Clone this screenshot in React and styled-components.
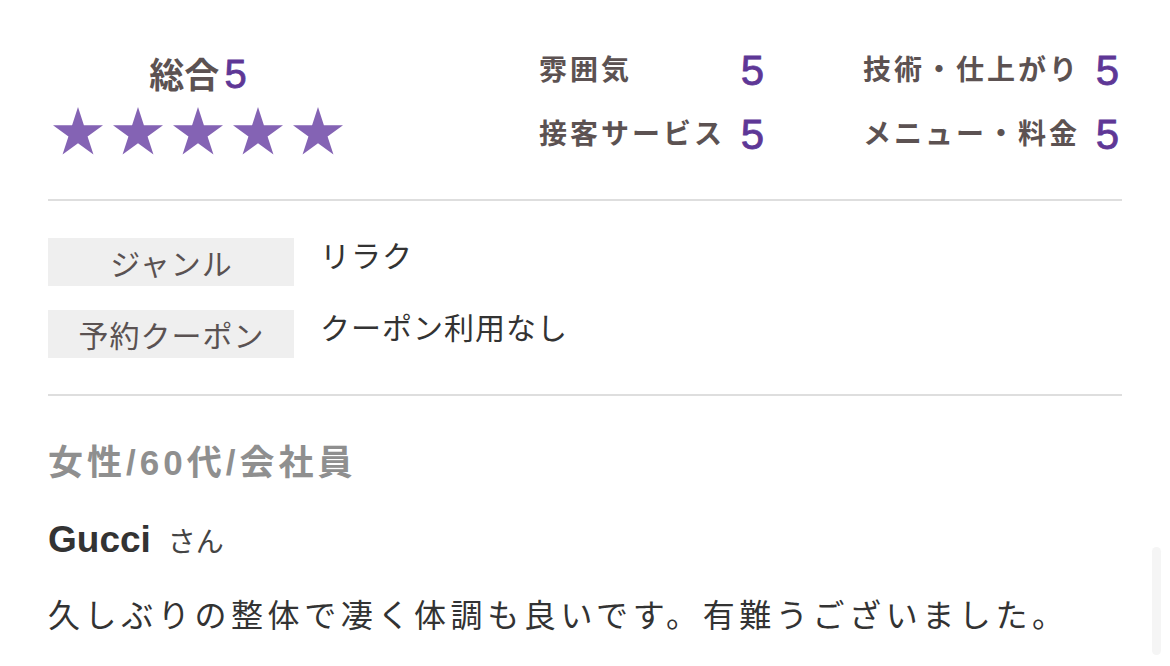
import styled, { createGlobalStyle } from "styled-components";

const GlobalStyle = createGlobalStyle`
    html, body {
        margin: 0;
        padding: 0;
        background: #ffffff;
    }
    body {
        font-family: "Liberation Sans", "Noto Sans CJK JP", sans-serif;
        color: #333333;
    }
`;

const Page = styled.div`
    position: relative;
    width: 1170px;
    height: 666px;
    overflow: hidden;
    box-sizing: border-box;
    padding: 0 48px;
`;

const Top = styled.section`
    display: flex;
    justify-content: space-between;
    align-items: flex-start;
    padding: 39px 3px 32px 5px;
`;

const Overall = styled.div`
    display: flex;
    flex-direction: column;
    align-items: center;
    width: 290px;
    margin-top: 15px;
`;

const OverallTitle = styled.div`
    font-size: 35px;
    font-weight: 700;
    line-height: 40px;
    color: #5c5252;
    display: flex;
    align-items: baseline;
    gap: 5px;
`;

const Score = styled.span`
    font-family: "Liberation Sans", sans-serif;
    font-size: ${props => props.$size || "42px"};
    font-weight: 400;
    -webkit-text-stroke: 0.8px #5e3796;
    color: #5e3796;
    line-height: 1;
`;

const Stars = styled.div`
    display: flex;
    gap: 10px;
    margin-top: 11px;
`;

const StarIcon = styled.svg`
    width: 50px;
    height: 48px;
    fill: #8463b4;
    display: block;
`;

const Ratings = styled.div`
    display: grid;
    grid-template-columns: 225px 256px;
    grid-auto-rows: 64px;
    column-gap: 99px;
    align-items: center;
`;

const RatingCell = styled.div`
    display: flex;
    justify-content: space-between;
    align-items: center;
`;

const RatingLabel = styled.span`
    font-size: 28px;
    font-weight: 700;
    letter-spacing: 3px;
    color: #5c5252;
    line-height: 1;
`;

const Divider = styled.hr`
    margin: 0;
    border: none;
    height: 2px;
    background: #dedede;
`;

const InfoTable = styled.div`
    display: flex;
    flex-direction: column;
    gap: 24px;
    padding: 37px 0 36px;
`;

const InfoRow = styled.div`
    display: flex;
    align-items: flex-start;
    gap: 26px;
`;

const InfoLabel = styled.div`
    width: 246px;
    height: 48px;
    display: flex;
    align-items: center;
    justify-content: center;
    background: #efefef;
    font-size: 30px;
    letter-spacing: 1px;
    padding-left: 1px;
    box-sizing: border-box;
    color: #5a5252;
`;

const InfoValue = styled.div`
    font-size: 30px;
    letter-spacing: 1px;
    line-height: 38px;
    color: #333333;
`;

const Review = styled.section`
    padding-top: 47px;
`;

const Demographic = styled.div`
    font-size: 35px;
    font-weight: 700;
    line-height: 40px;
    letter-spacing: 4px;
    color: #8f8f8f;
`;

const Reviewer = styled.div`
    margin-top: 35px;
    line-height: 44px;
    display: flex;
    align-items: baseline;
`;

const Name = styled.span`
    font-size: 37px;
    font-weight: 700;
    color: #333333;
`;

const Honorific = styled.span`
    font-size: 28px;
    color: #444444;
    margin-left: 17px;
`;

const Body = styled.p`
    margin: 29px 0 0;
    font-size: 32px;
    letter-spacing: 4.6px;
    line-height: 44px;
    color: #333333;
    white-space: nowrap;
`;

const ScrollThumb = styled.div`
    position: absolute;
    left: 1152px;
    top: 547px;
    width: 9px;
    height: 108px;
    border-radius: 5px;
    background: #f5f5f5;
`;

function Star() {
    return (
        <StarIcon viewBox="0 0 50 48">
            <polygon points="25,0 30.91,18.17 50,18.17 34.56,29.41 40.46,47.58 25,36.35 9.54,47.58 15.44,29.41 0,18.17 19.09,18.17" />
        </StarIcon>
    );
}

const ratings = [
    { label: "雰囲気", score: 5 },
    { label: "技術・仕上がり", score: 5 },
    { label: "接客サービス", score: 5 },
    { label: "メニュー・料金", score: 5 },
];

const info = [
    { label: "ジャンル", value: "リラク" },
    { label: "予約クーポン", value: "クーポン利用なし" },
];

export default function App() {
    return (
        <Page>
            <GlobalStyle />
            <Top>
                <Overall>
                    <OverallTitle>
                        総合<Score $size="40px">5</Score>
                    </OverallTitle>
                    <Stars>
                        {[0, 1, 2, 3, 4].map(i => <Star key={i} />)}
                    </Stars>
                </Overall>
                <Ratings>
                    {ratings.map(r => (
                        <RatingCell key={r.label}>
                            <RatingLabel>{r.label}</RatingLabel>
                            <Score>{r.score}</Score>
                        </RatingCell>
                    ))}
                </Ratings>
            </Top>
            <Divider />
            <InfoTable>
                {info.map(row => (
                    <InfoRow key={row.label}>
                        <InfoLabel>{row.label}</InfoLabel>
                        <InfoValue>{row.value}</InfoValue>
                    </InfoRow>
                ))}
            </InfoTable>
            <Divider />
            <Review>
                <Demographic>女性/60代/会社員</Demographic>
                <Reviewer>
                    <Name>Gucci</Name>
                    <Honorific>さん</Honorific>
                </Reviewer>
                <Body>久しぶりの整体で凄く体調も良いです。有難うございました。</Body>
            </Review>
            <ScrollThumb />
        </Page>
    );
}
